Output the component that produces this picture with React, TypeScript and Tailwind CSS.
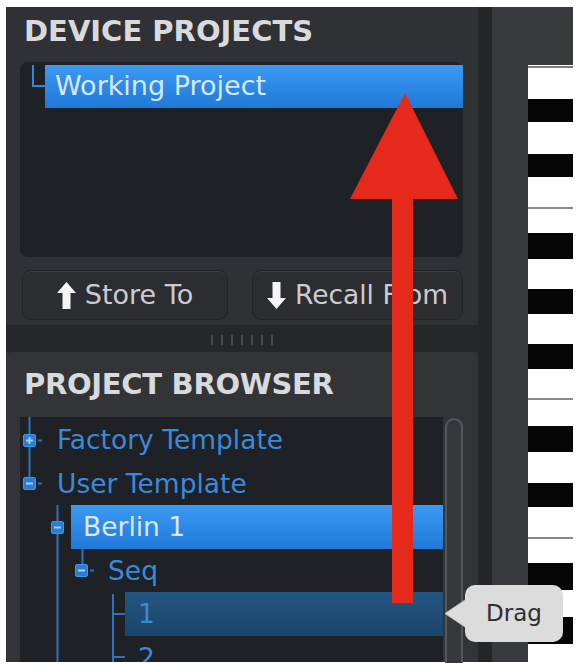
import React from "react";

function TreeIcon({ plus }: { plus?: boolean }) {
  return (
    <svg width="13" height="13" viewBox="0 0 13 13" className="shrink-0">
      <rect x="0.5" y="0.5" width="12" height="12" rx="1.5" fill="#2a7dd1" stroke="#3f95e6" />
      <rect x="3" y="5.5" width="7" height="2" fill="#9fd0fb" />
      {plus && <rect x="5.5" y="3" width="2" height="7" fill="#9fd0fb" />}
    </svg>
  );
}

function UpArrow() {
  return (
    <svg width="19" height="27" viewBox="0 0 19 27" className="shrink-0">
      <path d="M9.5 0 L19 11 L13.5 11 L13.5 27 L5.5 27 L5.5 11 L0 11 Z" fill="#f5f5f5" />
    </svg>
  );
}

function DownArrow() {
  return (
    <svg width="19" height="27" viewBox="0 0 19 27" className="shrink-0">
      <path d="M9.5 27 L19 16 L13.5 16 L13.5 0 L5.5 0 L5.5 16 L0 16 Z" fill="#f5f5f5" />
    </svg>
  );
}

function Piano() {
  const blacks: [number, number][] = [
    [34, 57],
    [89, 112],
    [168, 194],
    [224, 249],
    [279, 304],
    [361, 387],
    [418, 442],
    [498, 525],
    [552, 579],
  ];
  const lines = [142, 333, 472];
  return (
    <svg width="45" height="597" viewBox="0 0 45 597" className="block">
      <rect x="0" y="0" width="45" height="597" fill="#ffffff" />
      <rect x="0" y="1" width="45" height="2" fill="#7d7d7d" />
      {blacks.map(([a, b], i) => (
        <rect key={i} x="0" y={a} width="45" height={b - a} fill="#050505" />
      ))}
      {lines.map((y, i) => (
        <rect key={i} x="0" y={y} width="45" height="2" fill="#8a8a8a" />
      ))}
    </svg>
  );
}

export default function App() {
  return (
    <div className="relative w-[578px] h-[664px] bg-white overflow-hidden font-['DejaVu_Sans',sans-serif]">
      <div className="flex h-[662px] pt-[7px] pl-[6px]">
        {/* Left column */}
        <div className="w-[472px] flex flex-col bg-[#2e3033]">
          {/* Device projects */}
          <div className="h-[318px] flex flex-col bg-[#2f3135]">
            <div className="pt-[8px] pl-[18px] text-[29px] leading-[32px] font-bold text-[#d9dadc]">
              DEVICE PROJECTS
            </div>
            <div className="mt-[15px] ml-[14px] w-[443px] h-[195px] rounded-[8px] bg-[#1e2126] pt-[3px]">
              <div className="flex h-[43px]">
                <svg width="25" height="43" viewBox="0 0 25 43" className="shrink-0">
                  <path d="M13 0 L13 21 L25 21" stroke="#3a86d6" strokeWidth="2" fill="none" />
                </svg>
                <div className="flex-1 flex items-center pl-[10px] bg-gradient-to-b from-[#3c9af2] to-[#1f79d8] text-[27px] text-[#d6e9fc]">
                  Working Project
                </div>
              </div>
            </div>
            <div className="mt-[13px] flex">
              <div className="ml-[16px] w-[206px] h-[50px] rounded-[9px] bg-[#2b2d31] border border-[#222427] shadow-[inset_0_1px_0_#3a3c40] flex items-center justify-center gap-[9px] text-[27px] text-[#cbccce]">
                <UpArrow />
                <span>Store To</span>
              </div>
              <div className="ml-[24px] w-[211px] h-[50px] rounded-[9px] bg-[#2b2d31] border border-[#222427] shadow-[inset_0_1px_0_#3a3c40] flex items-center justify-center gap-[9px] text-[26.5px] text-[#cbccce]">
                <DownArrow />
                <span>Recall From</span>
              </div>
            </div>
          </div>
          {/* Divider with grip */}
          <div className="h-[27px] bg-[#26272a] flex items-center justify-center gap-[8px] pt-[2px]">
            {[0, 1, 2, 3, 4, 5, 6].map((i) => (
              <div key={i} className="w-[2px] h-[10px] bg-[#47494d]" />
            ))}
          </div>
          {/* Project browser */}
          <div className="flex-1 min-h-0 flex flex-col rounded-t-[8px] bg-[#323438]">
            <div className="pt-[16px] pl-[18px] text-[29px] leading-[32px] font-bold text-[#d9dadc] tracking-[-0.3px]">
              PROJECT BROWSER
            </div>
            <div className="mt-[17px] flex-1 min-h-0 flex pl-[14px]">
              <div className="relative w-[423px] h-full bg-[#1e2126] overflow-hidden text-[26.5px] leading-[30px]">
                <svg className="absolute inset-0 pointer-events-none" width="423" height="245" viewBox="0 0 423 245">
                  <g stroke="#2f72b8" strokeWidth="2" fill="none">
                    <path d="M9.5 0 L9.5 60" />
                    <path d="M37.5 88 L37.5 245" />
                    <path d="M62.5 132 L62.5 147" />
                    <path d="M93 177 L93 245" />
                    <path d="M93 197 L105 197" />
                    <path d="M93 240 L105 240" />
                    <path d="M18 23.5 L22 23.5" />
                    <path d="M18 66.5 L22 66.5" />
                    <path d="M70 153.5 L74 153.5" />
                  </g>
                </svg>
                <div className="relative pt-[1px]">
                  <div className="flex items-center h-[44px]">
                    <div className="w-[3px] shrink-0" />
                    <TreeIcon plus />
                    <div className="ml-[21px] text-[#3b8ad9]">Factory Template</div>
                  </div>
                  <div className="flex items-center h-[43px]">
                    <div className="w-[3px] shrink-0" />
                    <TreeIcon />
                    <div className="ml-[21px] text-[#3b8ad9]">User Template</div>
                  </div>
                  <div className="flex items-center h-[44px]">
                    <div className="w-[31px] shrink-0" />
                    <TreeIcon />
                    <div className="ml-[7px] flex-1 h-full flex items-center pl-[12px] bg-gradient-to-b from-[#3c9af2] to-[#1f79d8] text-[#d8e8f8]">
                      Berlin 1
                    </div>
                  </div>
                  <div className="flex items-center h-[43px]">
                    <div className="w-[55px] shrink-0" />
                    <TreeIcon />
                    <div className="ml-[20px] text-[#3b8ad9]">Seq</div>
                  </div>
                  <div className="flex items-center h-[44px]">
                    <div className="ml-[105px] flex-1 h-full flex items-center pl-[13px] bg-gradient-to-b from-[#235683] to-[#1b4468] text-[#3a88d8]">
                      1
                    </div>
                  </div>
                  <div className="flex items-center h-[43px] pl-[118px] text-[#3a88d8]">2</div>
                </div>
              </div>
              <div className="ml-[2px] w-[18px] h-full rounded-t-full border-2 border-b-0 border-[#55575b] bg-[#35373b] mt-[1px]" />
            </div>
          </div>
        </div>
        {/* Dark strip */}
        <div className="w-[14px] bg-[#252628]" />
        {/* Gray column */}
        <div className="w-[36px] bg-[#393a3d]" />
        {/* Piano column */}
        <div className="w-[45px] flex flex-col">
          <div className="h-[58px] bg-[#393a3d]" />
          <Piano />
        </div>
      </div>

      {/* Red arrow overlay */}
      <svg className="absolute inset-0 pointer-events-none" width="578" height="664" viewBox="0 0 578 664">
        <path d="M405 93 L458 199 L350 199 Z" fill="#e5291b" />
        <rect x="392" y="197" width="21" height="406" fill="#e5291b" />
      </svg>

      {/* Drag tooltip */}
      <div className="absolute left-[465px] top-[585px] w-[98px] h-[57px]">
        <svg className="absolute left-[-21px] top-[12px]" width="24" height="33" viewBox="0 0 24 33">
          <path d="M24 1 L1 16.5 L24 32 Z" fill="#dcdcdc" stroke="#bfbfbf" strokeWidth="1" />
        </svg>
        <div className="relative w-full h-full rounded-[10px] bg-[#dcdcdc] flex items-center justify-center text-[23px] text-[#2e2e2e]">
          Drag
        </div>
      </div>
    </div>
  );
}
